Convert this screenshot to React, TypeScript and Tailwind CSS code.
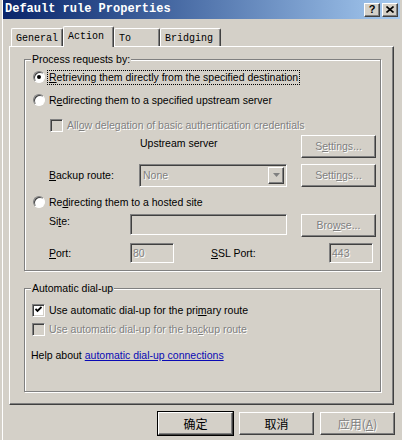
import type { ReactNode } from 'react'

// classic 3D bevels
const raised =
  'border border-t-white border-l-white border-r-[#404040] border-b-[#404040] bg-[#d4d0c8] shadow-[inset_-1px_-1px_0_#808080]'
const sunken =
  'border border-t-[#808080] border-l-[#808080] border-r-white border-b-white shadow-[inset_1px_1px_0_#404040,inset_-1px_-1px_0_#d4d0c8]'
const grayed = 'text-[#808080] [text-shadow:1px_1px_0_#ffffff]'

function Radio({ on }: { on?: boolean }) {
  return (
    <span className="flex size-[12px] shrink-0 items-center justify-center rounded-full border border-t-[#808080] border-l-[#808080] border-r-white border-b-white bg-white shadow-[inset_1px_1px_0_#404040]">
      {on && <span className="size-[4px] rounded-full bg-black" />}
    </span>
  )
}

function Check({ on, disabled }: { on?: boolean; disabled?: boolean }) {
  return (
    <span
      className={`flex size-[13px] shrink-0 items-center justify-center ${sunken} ${
        disabled ? 'bg-[#d4d0c8]' : 'bg-white'
      }`}
    >
      {on && (
        <svg width="7" height="7" viewBox="0 0 7 7" className="mt-[-1px]">
          <path d="M0.5 3 L2.5 5 L6.5 1" fill="none" stroke="#000" strokeWidth="1.8" />
        </svg>
      )}
    </span>
  )
}

function Btn({ children, disabled, def }: { children: ReactNode; disabled?: boolean; def?: boolean }) {
  return (
    <button
      type="button"
      className={`flex h-[23px] w-[75px] shrink-0 items-center justify-center ${raised} ${disabled ? grayed : 'text-black'} ${
        def ? 'outline outline-1 outline-black' : ''
      }`}
    >
      {children}
    </button>
  )
}

function Field({ className, children }: { className: string; children?: ReactNode }) {
  return (
    <div className={`flex items-center bg-[#d4d0c8] pl-[2px] ${sunken} ${grayed} ${className}`}>{children}</div>
  )
}

function Tab({ label, active, w }: { label: string; active?: boolean; w: string }) {
  return (
    <div
      className={`${w} rounded-t-[2px] border-l border-t border-r border-l-white border-t-white border-r-[#404040] bg-[#d4d0c8] pl-[4px] shadow-[inset_-1px_0_0_#808080] ${
        active ? 'relative z-10 -mb-px h-[21px] pt-[3px]' : 'h-[18px] pt-[3px]'
      }`}
    >
      {label}
    </div>
  )
}

export default function App() {
  return (
    <div className="h-[440px] w-[402px] overflow-hidden bg-[#d4d0c8] font-['Liberation_Sans',Arial,sans-serif] text-[10.5px] leading-[13px] text-black">
      <div className="ml-[2px] mr-[2px] flex h-full flex-col border-l border-white">
        {/* caption */}
        <div className="flex h-[19px] items-center bg-gradient-to-r from-[#0a246a] to-[#a6caf0] pl-[2px] pr-[2px]">
          <span className="flex-1 font-['Liberation_Mono',monospace] text-[12px] font-bold text-white">
            Default rule Properties
          </span>
          <span className={`flex h-[14px] w-[16px] items-center justify-center text-[11px] font-bold ${raised}`}>?</span>
          <span className={`ml-[2px] flex h-[14px] w-[16px] items-center justify-center ${raised}`}>
            <svg width="8" height="7" viewBox="0 0 8 7">
              <path d="M0.5 0.5 L7.5 6.5 M7.5 0.5 L0.5 6.5" stroke="#000" strokeWidth="1.6" />
            </svg>
          </span>
        </div>

        {/* tab strip */}
        <div className="mx-[6px] flex h-[27px] items-end pl-[2px] font-['Liberation_Mono',monospace] text-[10px]">
          <Tab label="General" w="w-[52px]" />
          <Tab label="Action" w="w-[51px]" active />
          <Tab label="To" w="w-[46px]" />
          <Tab label="Bridging" w="w-[61px]" />
        </div>

        {/* page */}
        <div className="mx-[6px] h-[359px] border border-t-white border-l-white border-r-[#404040] border-b-[#404040] shadow-[inset_-1px_-1px_0_#808080]">
          <fieldset className="ml-[14px] mt-[6px] w-[357px] border border-[#808080] shadow-[1px_1px_0_#ffffff,inset_1px_1px_0_#ffffff]">
            <legend className="ml-[6px] bg-[#d4d0c8] px-[1px]">Process requests by:</legend>
            <div className="flex flex-col pb-[7px] pl-[8px] pr-[4px] pt-[1px]">
              <label className="flex h-[20px] items-center gap-[3px]">
                <Radio on />
                <span className="px-[1px] outline outline-1 outline-dotted outline-black">
                  <span className="underline">R</span>etrieving them directly from the specified destination
                </span>
              </label>
              <label className="mt-[3px] flex h-[20px] items-center gap-[4px]">
                <Radio />
                <span>
                  R<span className="underline">e</span>directing them to a specified upstream server
                </span>
              </label>
              <label className="mt-[6px] flex h-[18px] items-center gap-[4px] pl-[17px]">
                <Check disabled />
                <span className={grayed}>
                  All<span className="underline">o</span>w delegation of basic authentication credentials
                </span>
              </label>
              <div className="mt-[1px] flex h-[23px] items-start">
                <span className="ml-[107px] pt-[2px]">Upstream server</span>
                <div className="ml-auto">
                  <Btn disabled>
                    S<span className="underline">e</span>ttings...
                  </Btn>
                </div>
              </div>
              <div className="mt-[5px] flex h-[24px] items-center pl-[16px]">
                <span className="w-[90px]">
                  <span className="underline">B</span>ackup route:
                </span>
                <div className={`flex h-[23px] w-[148px] items-center bg-[#d4d0c8] p-[2px] ${sunken}`}>
                  <span className={`flex-1 pl-[1px] ${grayed}`}>None</span>
                  <span className={`flex h-[17px] w-[16px] items-center justify-center ${raised}`}>
                    <svg width="7" height="4" viewBox="0 0 7 4">
                      <path d="M0 0 H7 L3.5 4 Z" fill="#808080" />
                    </svg>
                  </span>
                </div>
                <div className="ml-auto">
                  <Btn disabled>
                    Setti<span className="underline">n</span>gs...
                  </Btn>
                </div>
              </div>
              <label className="mt-[5px] flex h-[20px] items-center gap-[4px]">
                <Radio />
                <span>
                  Re<span className="underline">d</span>irecting them to a hosted site
                </span>
              </label>
              <div className="mt-[2px] flex h-[23px] items-start pl-[16px]">
                <span className="w-[81px] pt-[1px]">
                  Si<span className="underline">t</span>e:
                </span>
                <Field className="h-[21px] w-[157px]" />
                <div className="ml-auto">
                  <Btn disabled>
                    Bro<span className="underline">w</span>se...
                  </Btn>
                </div>
              </div>
              <div className="mt-[6px] flex h-[20px] items-center pl-[16px]">
                <span className="w-[81px]">
                  <span className="underline">P</span>ort:
                </span>
                <Field className="h-[20px] w-[44px]">80</Field>
                <span className="ml-[37px] w-[118px]">
                  <span className="underline">S</span>SL Port:
                </span>
                <Field className="h-[20px] w-[44px]">443</Field>
              </div>
            </div>
          </fieldset>

          <fieldset className="ml-[14px] mt-[11px] h-[110px] w-[357px] border border-[#808080] shadow-[1px_1px_0_#ffffff,inset_1px_1px_0_#ffffff]">
            <legend className="ml-[6px] bg-[#d4d0c8] px-[1px]">Automatic dial-up</legend>
            <div className="flex flex-col pl-[7px] pt-[6px]">
              <label className="flex h-[18px] items-center gap-[4px]">
                <Check on />
                <span>
                  Use automatic dial-up for the pri<span className="underline">m</span>ary route
                </span>
              </label>
              <label className="mt-[1px] flex h-[18px] items-center gap-[4px]">
                <Check disabled />
                <span className={grayed}>
                  Use automatic dial-up for the ba<span className="underline">c</span>kup route
                </span>
              </label>
              <p className="ml-[-1px] mt-[11px] h-[14px]">
                Help about{' '}
                <a href="#" className="text-[#0a0ab4] underline">
                  automatic dial-up connections
                </a>
              </p>
            </div>
          </fieldset>
        </div>

        {/* dialog buttons */}
        <div className="mt-[7px] flex justify-end gap-[6px] pr-[5px] font-['Noto_Sans_CJK_SC',sans-serif] text-[12px]">
          <Btn def>确定</Btn>
          <Btn>取消</Btn>
          <Btn disabled>
            应用(<span className="underline">A</span>)
          </Btn>
        </div>
      </div>
    </div>
  )
}
